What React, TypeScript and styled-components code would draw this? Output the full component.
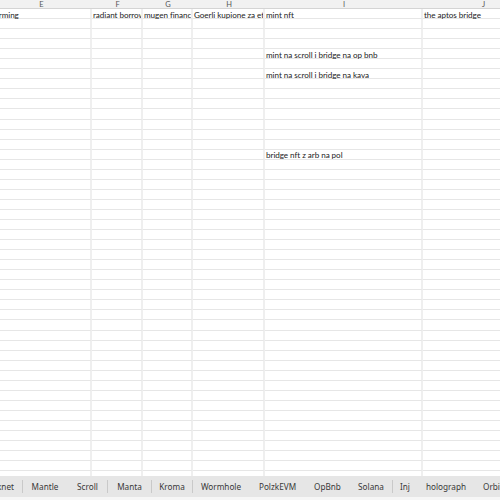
import React from "react";
import styled, { createGlobalStyle } from "styled-components";

const GlobalStyle = createGlobalStyle`
  html, body {
    margin: 0;
    padding: 0;
    background: #ffffff;
    overflow: hidden;
  }
`;

const Window = styled.div`
  width: 500px;
  height: 500px;
  display: flex;
  flex-direction: column;
  overflow: hidden;
  background: #ffffff;
`;

const Sheet = styled.div`
  flex: 1;
  min-height: 0;
  overflow: hidden;
`;

const SheetGrid = styled.div<{ $cols: string }>`
  display: grid;
  grid-template-columns: ${(p) => p.$cols};
  grid-template-rows: 9px;
  grid-auto-rows: 10.06px;
  margin-left: -9px;
  width: max-content;
`;

const ColHeader = styled.div`
  box-sizing: border-box;
  background: #f1f1f1;
  border-bottom: 1px solid #d4d4d4;
  color: #555555;
  font-family: "Lato", "Liberation Sans", sans-serif;
  font-size: 7.5px;
  line-height: 9px;
  text-align: center;
`;

const Cell = styled.div`
  box-sizing: border-box;
  border-right: 2px solid #efefef;
  border-bottom: 1px solid #e6e6e6;
  padding: 1.5px 1px 0 1px;
  font-family: "Lato", "Liberation Sans", sans-serif;
  font-size: 8.1px;
  letter-spacing: -0.05px;
  line-height: 8px;
  color: #222222;
  white-space: nowrap;
  overflow-x: clip;
  overflow-y: visible;
`;

const TabBar = styled.div`
  flex: 0 0 21px;
  display: flex;
  align-items: center;
  background: #e6e6e6;
  overflow: hidden;
`;

const Tab = styled.div<{ $width: number; $divided?: boolean; $clipped?: boolean }>`
  flex: 0 0 ${(p) => p.$width}px;
  box-sizing: border-box;
  height: 13px;
  display: flex;
  align-items: center;
  justify-content: ${(p) => (p.$clipped ? "flex-end" : "center")};
  padding-right: ${(p) => (p.$clipped ? "8px" : "0")};
  overflow: hidden;
  border-right: 1px solid ${(p) => (p.$divided ? "#c9c9c9" : "transparent")};
  font-family: "Noto Sans", "Open Sans", sans-serif;
  font-size: 8.2px;
  color: #383838;
  white-space: nowrap;
`;

const BottomStrip = styled.div`
  flex: 0 0 3px;
  background: #f6f6f6;
`;

const columns = [
  { key: "E", width: 101 },
  { key: "F", width: 51 },
  { key: "G", width: 50 },
  { key: "H", width: 72 },
  { key: "I", width: 158 },
  { key: "J", width: 121 },
];

const ROWS = 47;

// Filled cells keyed by row number (1-based) and column letter.
const cells: Record<number, Record<string, string>> = {
  1: {
    E: "farming",
    F: "radiant borrow",
    G: "mugen finance",
    H: "Goerli kupione za eth",
    I: "mint nft",
    J: "the aptos bridge",
  },
  5: { I: "mint na scroll i bridge na op bnb" },
  7: { I: "mint na scroll i bridge na kava" },
  15: { I: "bridge nft z arb na pol" },
};

// Sheet tabs; the strip is scrolled so the first one shows only its tail.
const tabs: { name: string; width: number; divided?: boolean; clipped?: boolean }[] = [
  { name: "Starknet", width: 23, divided: true, clipped: true },
  { name: "Mantle", width: 45 },
  { name: "Scroll", width: 40, divided: true },
  { name: "Manta", width: 44, divided: true },
  { name: "Kroma", width: 41, divided: true },
  { name: "Wormhole", width: 57 },
  { name: "PolzkEVM", width: 56 },
  { name: "OpBnb", width: 44 },
  { name: "Solana", width: 43, divided: true },
  { name: "Inj", width: 25 },
  { name: "holograph", width: 57 },
  { name: "Orbiter", width: 45 },
];

export default function App() {
  const cols = columns.map((c) => `${c.width}px`).join(" ");
  const rows = Array.from({ length: ROWS }, (_, i) => i + 1);

  return (
    <Window>
      <GlobalStyle />
      <Sheet>
        <SheetGrid $cols={cols}>
          {columns.map((c) => (
            <ColHeader key={`h-${c.key}`}>{c.key}</ColHeader>
          ))}
          {rows.map((r) =>
            columns.map((c) => (
              <Cell key={`${r}-${c.key}`}>{cells[r]?.[c.key] ?? ""}</Cell>
            ))
          )}
        </SheetGrid>
      </Sheet>
      <TabBar>
        {tabs.map((t) => (
          <Tab
            key={t.name}
            $width={t.width}
            $divided={t.divided}
            $clipped={t.clipped}
          >
            {t.name}
          </Tab>
        ))}
      </TabBar>
      <BottomStrip />
    </Window>
  );
}
